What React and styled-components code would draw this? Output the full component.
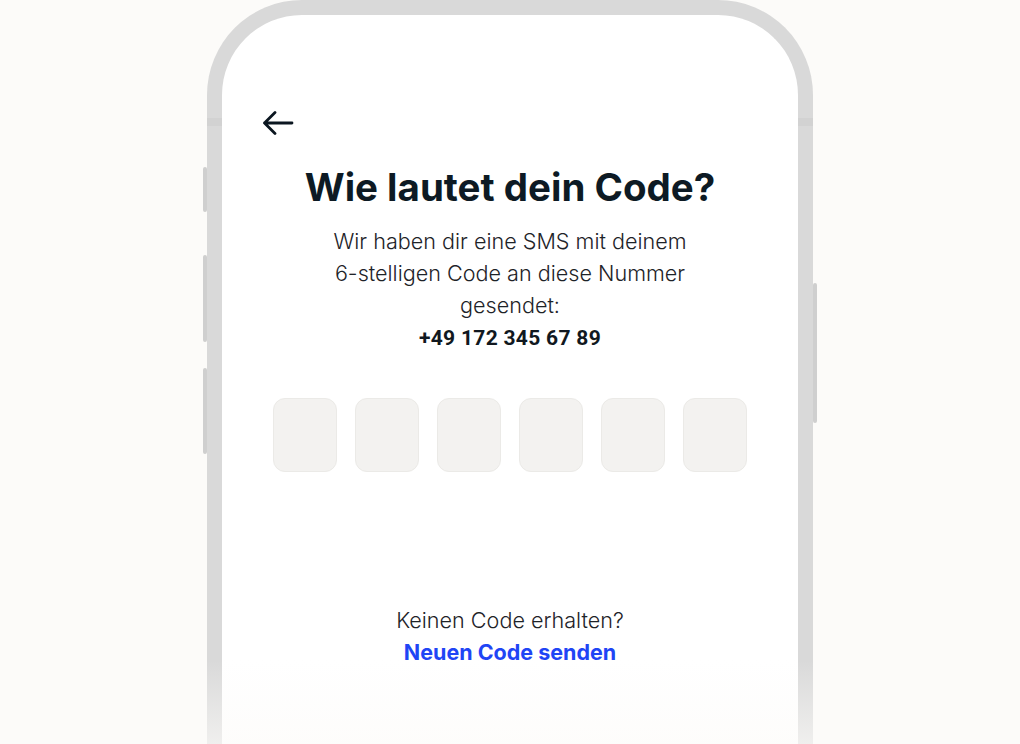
import React from 'react'
import styled, { createGlobalStyle } from 'styled-components'

const GlobalStyle = createGlobalStyle`
  html, body {
    margin: 0;
    padding: 0;
    background: #fcfbf9;
  }
  body {
    height: 744px;
    overflow: hidden;
    font-family: Inter, "Noto Sans", sans-serif;
  }
`

const Stage = styled.div`
  height: 744px;
  display: flex;
  justify-content: center;
  overflow: hidden;
`

const Phone = styled.div`
  position: relative;
  box-sizing: border-box;
  width: 606px;
  height: 800px;
  border: 15px solid #d9d9d9;
  border-bottom: none;
  border-radius: 95px 95px 0 0;
  background: #ffffff;

  &::before,
  &::after {
    content: '';
    position: absolute;
    top: 103px;
    width: 15px;
    height: 8px;
    background: #d2d2d2;
  }
  &::before {
    left: -15px;
  }
  &::after {
    right: -15px;
  }
`

const SideButton = styled.span`
  position: absolute;
  width: 4px;
  border-radius: 2px;
  background: #cfcfcf;
  top: ${(p) => p.$top}px;
  height: ${(p) => p.$height}px;
  ${(p) => (p.$side === 'left' ? 'left: -19px;' : 'right: -19px;')}
`

const Fade = styled.div`
  position: absolute;
  left: -15px;
  right: -15px;
  top: 645px;
  height: 160px;
  background: linear-gradient(
    to bottom,
    rgba(252, 251, 249, 0) 0%,
    rgba(252, 251, 249, 0.65) 53%,
    rgba(252, 251, 249, 0.9) 100%
  );
  pointer-events: none;
`

const Screen = styled.div`
  display: flex;
  flex-direction: column;
  align-items: center;
  padding-top: 97px;
`

const BackRow = styled.div`
  align-self: stretch;
  padding-left: 40px;
  height: 22px;
  display: flex;
  align-items: center;
`

const BackButton = styled.button`
  border: none;
  background: none;
  padding: 0;
  width: 32px;
  height: 24px;
  cursor: pointer;
  color: #0b1620;
  display: flex;
`

const Title = styled.h1`
  margin: 32px 0 0;
  font-family: Inter, sans-serif;
  font-weight: 700;
  font-size: 38.5px;
  line-height: 42px;
  color: #0d1a24;
`

const Lead = styled.p`
  margin: 17px 0 0;
  text-align: center;
  font-family: Inter, sans-serif;
  font-weight: 300;
  font-size: 21.6px;
  line-height: 32px;
  color: #1e2328;
  white-space: nowrap;
`

const Number = styled.strong`
  display: block;
  font-family: Roboto, sans-serif;
  font-weight: 700;
  font-size: 21px;
  letter-spacing: 0.3px;
  line-height: 34px;
  color: #111820;
`

const CodeRow = styled.div`
  margin-top: 43px;
  display: flex;
  gap: 18px;
`

const CodeBox = styled.input`
  box-sizing: border-box;
  width: 64px;
  height: 74px;
  border: 1px solid #ebeae7;
  border-radius: 12px;
  background: #f3f2f0;
  font-family: Inter, sans-serif;
  font-size: 26px;
  text-align: center;
  outline: none;
`

const Resend = styled.div`
  margin-top: 132px;
  text-align: center;
  font-family: Inter, sans-serif;
  font-weight: 300;
  font-size: 21.6px;
  line-height: 32px;
  color: #1e2328;
`

const ResendLink = styled.a`
  display: block;
  font-family: Inter, sans-serif;
  font-weight: 700;
  font-size: 21.5px;
  color: #1f45f5;
  text-decoration: none;
  cursor: pointer;
`

const ArrowLeft = () => (
  <svg width="32" height="24" viewBox="0 0 32 24" fill="none">
    <path
      d="M30 12H2.5M13 1.5L2.5 12 13 22.5"
      stroke="currentColor"
      strokeWidth="2.8"
      strokeLinecap="round"
      strokeLinejoin="round"
    />
  </svg>
)

const App = () => {
  const digits = [0, 1, 2, 3, 4, 5]

  return (
    <>
      <GlobalStyle />
      <Stage>
        <Phone>
          <SideButton $side="left" $top={152} $height={45} />
          <SideButton $side="left" $top={240} $height={87} />
          <SideButton $side="left" $top={353} $height={86} />
          <SideButton $side="right" $top={268} $height={140} />
          <Screen>
            <BackRow>
              <BackButton aria-label="Zurück">
                <ArrowLeft />
              </BackButton>
            </BackRow>
            <Title>Wie lautet dein Code?</Title>
            <Lead>
              Wir haben dir eine SMS mit deinem
              <br />
              6-stelligen Code an diese Nummer
              <br />
              gesendet:
              <Number>+49 172 345 67 89</Number>
            </Lead>
            <CodeRow>
              {digits.map((d) => (
                <CodeBox key={d} maxLength="1" inputMode="numeric" aria-label={`Ziffer ${d + 1}`} />
              ))}
            </CodeRow>
            <Resend>
              Keinen Code erhalten?
              <ResendLink>Neuen Code senden</ResendLink>
            </Resend>
          </Screen>
          <Fade />
        </Phone>
      </Stage>
    </>
  )
}

export default App
